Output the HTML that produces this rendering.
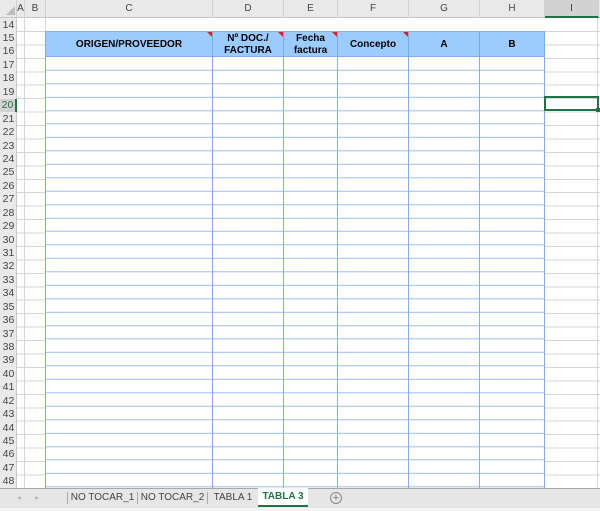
<!DOCTYPE html>
<html><head><meta charset="utf-8"><style>
*{margin:0;padding:0;box-sizing:border-box}
body{width:600px;height:511px;overflow:hidden;background:#fff;font-family:"Liberation Sans",Arial,sans-serif;position:relative}
.a{position:absolute}
.rn{position:absolute;left:0;width:17px;font-size:10.5px;color:#444;text-align:center;line-height:13px}
.ch{position:absolute;top:0;height:18px;font-size:10px;color:#444;text-align:center;line-height:18px;border-right:1px solid #d0d0d0}
.hd{position:absolute;top:32px;height:25px;background:#9ccbff;font-size:10px;font-weight:bold;color:#000;text-align:center;display:flex;align-items:center;justify-content:center;line-height:12px;border-right:1px solid #7fa8e8}
.tri{position:absolute;right:0;top:0;width:0;height:0;border-top:5px solid #e02020;border-left:5px solid transparent}
.tab{position:absolute;top:489px;height:17px;font-size:10px;color:#444;line-height:17px;text-align:center;white-space:nowrap}
</style></head><body>
<div class="a" style="left:17px;top:18px;width:583px;height:471px;background:repeating-linear-gradient(to bottom,transparent 0,transparent 12.44px,#d6d6d6 12.44px,#d6d6d6 13.44px);background-position:0 0.5px"></div>
<div class="a" style="left:24px;top:18px;width:1px;height:471px;background:#d6d6d6"></div>
<div class="a" style="left:45px;top:18px;width:1px;height:471px;background:#d6d6d6"></div>
<div class="a" style="left:597px;top:18px;width:1px;height:471px;background:#d6d6d6"></div>
<div class="a" style="left:46px;top:57px;width:498px;height:432px;background:#fff repeating-linear-gradient(to bottom,transparent 0,transparent 12.44px,#9dbcf2 12.44px,#9dbcf2 13.44px);background-position:0 0.3px"></div>
<div class="a" style="left:45px;top:31px;width:1px;height:458px;background:#85aaee"></div>
<div class="a" style="left:212px;top:31px;width:1px;height:458px;background:#85aaee"></div>
<div class="a" style="left:283px;top:31px;width:1px;height:458px;background:#85aaee"></div>
<div class="a" style="left:337px;top:31px;width:1px;height:458px;background:#85aaee"></div>
<div class="a" style="left:408px;top:31px;width:1px;height:458px;background:#85aaee"></div>
<div class="a" style="left:479px;top:31px;width:1px;height:458px;background:#85aaee"></div>
<div class="a" style="left:544px;top:31px;width:1px;height:458px;background:#85aaee"></div>
<div class="a" style="left:45px;top:31px;width:500px;height:1px;background:#85aaee"></div>
<div class="hd" style="left:46px;width:167px">ORIGEN/PROVEEDOR<span class="tri"></span></div>
<div class="hd" style="left:213px;width:71px">Nº DOC./<br>FACTURA<span class="tri"></span></div>
<div class="hd" style="left:284px;width:54px">Fecha<br>factura<span class="tri"></span></div>
<div class="hd" style="left:338px;width:71px">Concepto<span class="tri"></span></div>
<div class="hd" style="left:409px;width:71px">A</div>
<div class="hd" style="left:480px;width:65px">B</div>
<div class="a" style="left:45px;top:56px;width:500px;height:1px;background:#85aaee"></div>
<div class="a" style="left:544px;top:96px;width:55px;height:15px;border:2px solid #217346"></div>
<div class="a" style="left:596px;top:108px;width:4px;height:4px;background:#217346"></div>
<div class="a" style="left:0;top:0;width:600px;height:18px;background:#e9e9e9;border-bottom:1px solid #c8c8c8"></div>
<div class="a" style="left:6px;top:6px;width:0;height:0;border-bottom:9px solid #bdbdbd;border-left:9px solid transparent"></div>
<div class="ch" style="left:0;width:17px"></div>
<div class="ch" style="left:17px;width:8px">A</div>
<div class="ch" style="left:25px;width:21px">B</div>
<div class="ch" style="left:46px;width:167px">C</div>
<div class="ch" style="left:213px;width:71px">D</div>
<div class="ch" style="left:284px;width:54px">E</div>
<div class="ch" style="left:338px;width:71px">F</div>
<div class="ch" style="left:409px;width:71px">G</div>
<div class="ch" style="left:480px;width:65px">H</div>
<div class="ch" style="left:545px;width:54px;background:#d2d2d2;border-bottom:2px solid #217346">I</div>
<div class="a" style="left:0;top:18px;width:17px;height:471px;background:#e9e9e9;border-right:1px solid #c8c8c8"></div>
<div class="rn" style="top:19px">14</div><div class="rn" style="top:32px">15</div><div class="rn" style="top:45px">16</div><div class="rn" style="top:59px">17</div><div class="rn" style="top:72px">18</div><div class="rn" style="top:86px">19</div><div class="rn" style="top:99px;color:#217346;background:#d2d2d2;border-right:2px solid #217346">20</div><div class="rn" style="top:113px">21</div><div class="rn" style="top:126px">22</div><div class="rn" style="top:140px">23</div><div class="rn" style="top:153px">24</div><div class="rn" style="top:166px">25</div><div class="rn" style="top:180px">26</div><div class="rn" style="top:193px">27</div><div class="rn" style="top:207px">28</div><div class="rn" style="top:220px">29</div><div class="rn" style="top:234px">30</div><div class="rn" style="top:247px">31</div><div class="rn" style="top:260px">32</div><div class="rn" style="top:274px">33</div><div class="rn" style="top:287px">34</div><div class="rn" style="top:301px">35</div><div class="rn" style="top:314px">36</div><div class="rn" style="top:328px">37</div><div class="rn" style="top:341px">38</div><div class="rn" style="top:354px">39</div><div class="rn" style="top:368px">40</div><div class="rn" style="top:381px">41</div><div class="rn" style="top:395px">42</div><div class="rn" style="top:408px">43</div><div class="rn" style="top:422px">44</div><div class="rn" style="top:435px">45</div><div class="rn" style="top:448px">46</div><div class="rn" style="top:462px">47</div><div class="rn" style="top:475px">48</div>
<div class="a" style="left:0;top:488px;width:600px;height:20px;background:#e6e6e6;border-top:1px solid #a8a8a8"></div>
<div class="a" style="left:0;top:508px;width:600px;height:3px;background:#f4f4f4"></div>
<div class="tab" style="left:14px;width:10px;color:#bbb;font-size:8px">◂</div>
<div class="tab" style="left:32px;width:10px;color:#bbb;font-size:8px">▸</div>
<div class="a" style="left:67px;top:492px;width:1px;height:12px;background:#aaa"></div>
<div class="tab" style="left:68px;width:69px">NO TOCAR_1</div>
<div class="a" style="left:137px;top:492px;width:1px;height:12px;background:#aaa"></div>
<div class="tab" style="left:138px;width:69px">NO TOCAR_2</div>
<div class="a" style="left:207px;top:492px;width:1px;height:12px;background:#aaa"></div>
<div class="tab" style="left:208px;width:50px">TABLA 1</div>
<div class="tab" style="left:258px;width:50px;top:488px;height:19px;background:#fff;color:#217346;font-weight:bold;border-bottom:2px solid #217346;line-height:18px">TABLA 3</div>
<div class="a" style="left:330px;top:492px;width:12px;height:12px;border:1px solid #888;border-radius:50%;color:#777;font-size:11px;line-height:10px;text-align:center">+</div>
</body></html>
